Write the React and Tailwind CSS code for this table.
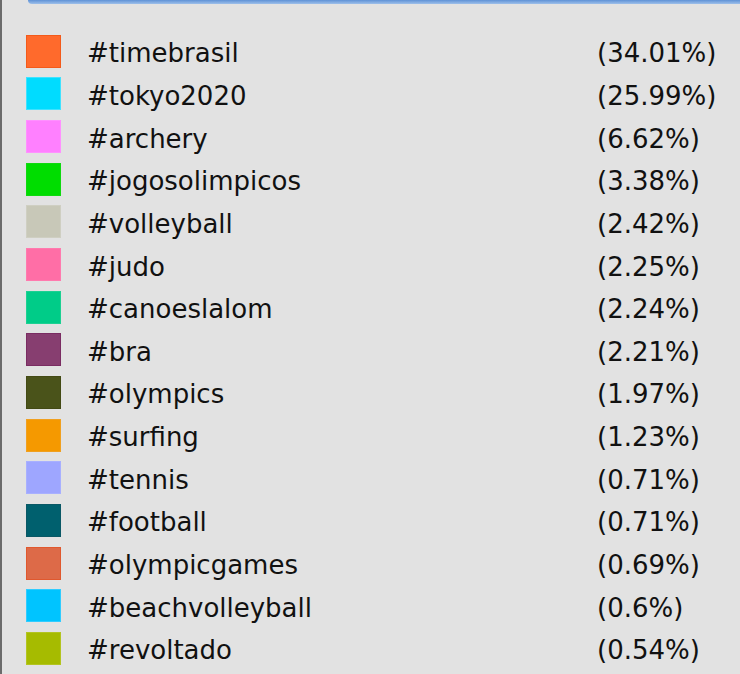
const items = [
  { tag: "#timebrasil", pct: "(34.01%)", color: "bg-[#ff6a2c]", edge: "border-[#f35a1a]" },
  { tag: "#tokyo2020", pct: "(25.99%)", color: "bg-[#00dcff]", edge: "border-[#3fe2ff]" },
  { tag: "#archery", pct: "(6.62%)", color: "bg-[#ff80ff]", edge: "border-[#ff90ff]" },
  { tag: "#jogosolimpicos", pct: "(3.38%)", color: "bg-[#00dd00]", edge: "border-[#10d810]" },
  { tag: "#volleyball", pct: "(2.42%)", color: "bg-[#c8c8b8]", edge: "border-[#cfcfc2]" },
  { tag: "#judo", pct: "(2.25%)", color: "bg-[#ff6ea6]", edge: "border-[#ff7aae]" },
  { tag: "#canoeslalom", pct: "(2.24%)", color: "bg-[#00cc88]", edge: "border-[#1cd092]" },
  { tag: "#bra", pct: "(2.21%)", color: "bg-[#873e70]", edge: "border-[#7a2c62]" },
  { tag: "#olympics", pct: "(1.97%)", color: "bg-[#4a531a]", edge: "border-[#434a14]" },
  { tag: "#surfing", pct: "(1.23%)", color: "bg-[#f59900]", edge: "border-[#f0a020]" },
  { tag: "#tennis", pct: "(0.71%)", color: "bg-[#9ea6ff]", edge: "border-[#a8b0ff]" },
  { tag: "#football", pct: "(0.71%)", color: "bg-[#00606e]", edge: "border-[#0a5866]" },
  { tag: "#olympicgames", pct: "(0.69%)", color: "bg-[#dd6a48]", edge: "border-[#e0582e]" },
  { tag: "#beachvolleyball", pct: "(0.6%)", color: "bg-[#00c4ff]", edge: "border-[#30ccff]" },
  { tag: "#revoltado", pct: "(0.54%)", color: "bg-[#a6bb00]", edge: "border-[#b3c420]" },
];

export default function App() {
  return (
    <div
      className="flex w-[740px] h-[674px] overflow-hidden bg-[#e2e2e2] text-[#111]"
      style={{ fontFamily: '"DejaVu Sans", sans-serif' }}
    >
      <div className="w-[2px] shrink-0 bg-[#6b6b6b]" />
      <div className="flex-1 flex flex-col">
        <div className="ml-[26px] h-[4px] rounded-bl-[6px] bg-gradient-to-b from-[#5f92d6] to-[#9ec0ea]" />
        <ul className="flex flex-col pt-[26px]">
          {items.map((it) => (
            <li key={it.tag} className="flex items-center h-[42.65px]">
              <span
                className={`ml-[24px] w-[35px] h-[33px] shrink-0 border ${it.color} ${it.edge}`}
              />
              <span className="ml-[26px] w-[510px] pt-[4px] text-[26px] leading-none">
                {it.tag}
              </span>
              <span className="pt-[4px] text-[26px] leading-none">{it.pct}</span>
            </li>
          ))}
        </ul>
      </div>
    </div>
  );
}
